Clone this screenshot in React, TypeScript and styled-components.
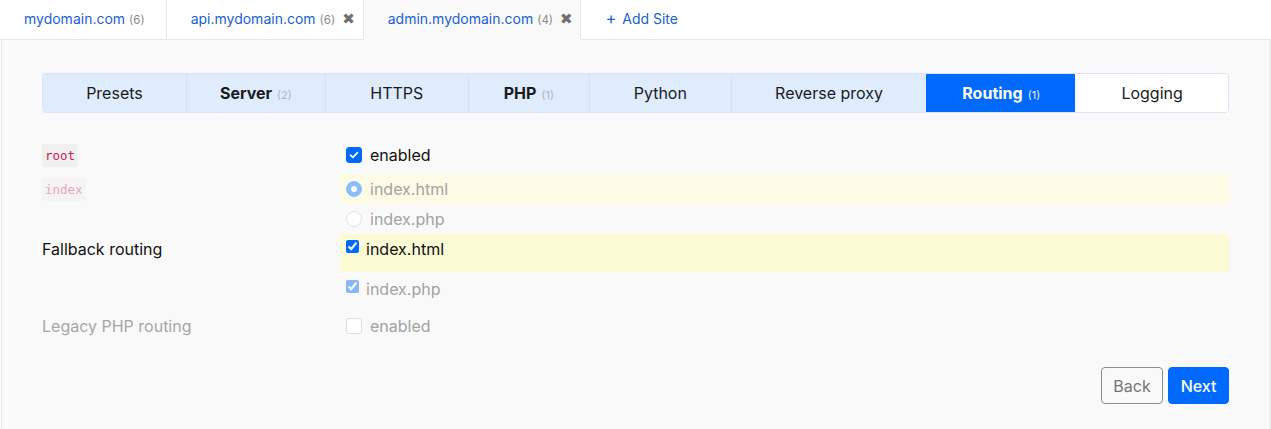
import React from "react";
import styled, { createGlobalStyle, css } from "styled-components";

const Global = createGlobalStyle`
  html, body { margin: 0; padding: 0; background: #ffffff; }
  body { font-family: Inter, "Open Sans", Arial, sans-serif; color: #000; }
  * { box-sizing: border-box; }
`;

const Page = styled.div`
  width: 1271px;
  height: 429px;
  display: flex;
  flex-direction: column;
  overflow: hidden;
`;

const SiteTabs = styled.div`
  display: flex;
  height: 40px;
  flex: 0 0 auto;
`;

const SiteTab = styled.div<{ $active?: boolean; $right?: number }>`
  display: flex;
  align-items: center;
  padding: 0 ${(p) => p.$right ?? 21}px 2px 24px;
  font-size: 14px;
  color: #1a5fd6;
  background: ${(p) => (p.$active ? "#f9f9f9" : "#ffffff")};
  border-right: 1px solid #e6e6e6;
  border-bottom: 1px solid ${(p) => (p.$active ? "transparent" : "#e6e6e6")};
  white-space: nowrap;
`;

const AddTab = styled(SiteTab)`
  flex: 1 1 auto;
  border-right: none;
  padding-left: 25px;
  gap: 6px;
`;

const Plus = styled.span`
  font-size: 16px;
  margin-top: -1px;
`;

const Count = styled.span`
  font-size: 11.5px;
  color: #8a8a8a;
  margin-left: 4px;
  margin-top: 2px;
`;

const Close = styled.span`
  font-size: 15px;
  color: #6f6f6f;
  margin-left: 7px;
  font-weight: 700;
  font-family: "DejaVu Sans", sans-serif;
`;

const Panel = styled.div`
  flex: 1 1 auto;
  background: #f9f9f9;
  border-left: 1px solid #e6e6e6;
  border-right: 1px solid #e6e6e6;
  margin-left: 1px;
  padding: 33px 41px 0 40px;
  display: flex;
  flex-direction: column;
`;

const TabBar = styled.div`
  display: flex;
  height: 40px;
  border-radius: 4px;
  overflow: hidden;
  border: 1px solid #d6e5f8;
`;

const Tab = styled.div<{ $state: "idle" | "active" | "next"; $w: number }>`
  flex: ${(p) => p.$w} 1 0;
  display: flex;
  align-items: center;
  justify-content: center;
  font-size: 16px;
  white-space: nowrap;
  border-left: 1px solid #d3e4f8;
  &:first-child { border-left: none; }
  ${(p) =>
    p.$state === "idle" &&
    css`
      background: #deecfd;
      color: #1b1b1b;
    `}
  ${(p) =>
    p.$state === "active" &&
    css`
      background: #0069ff;
      color: #ffffff;
      border-left-color: #0069ff;
    `}
  ${(p) =>
    p.$state === "next" &&
    css`
      background: #ffffff;
      color: #1b1b1b;
      border-left-color: #ffffff;
    `}
`;

const TabName = styled.span<{ $bold?: boolean }>`
  font-weight: ${(p) => (p.$bold ? 700 : 400)};
`;

const TabCount = styled.span<{ $light?: boolean }>`
  font-size: 11px;
  margin-left: 5px;
  margin-top: 3px;
  color: ${(p) => (p.$light ? "#e6efff" : "#b3b3b3")};
`;

const Form = styled.div`
  display: flex;
  flex-direction: column;
  margin-top: 27px;
`;

const Row = styled.div<{ $gap?: number }>`
  display: grid;
  grid-template-columns: 298px 1fr;
  margin-bottom: ${(p) => p.$gap ?? 0}px;
`;

const Label = styled.div<{ $h: number; $faded?: boolean }>`
  height: ${(p) => p.$h}px;
  display: flex;
  align-items: center;
  font-size: 16px;
  color: ${(p) => (p.$faded ? "#a6a6a6" : "#111")};
`;

const Code = styled.code<{ $faded?: boolean }>`
  font-family: "DejaVu Sans Mono", "Liberation Mono", monospace;
  font-size: 12.5px;
  color: ${(p) => (p.$faded ? "#eca5bd" : "#c7254e")};
  background: ${(p) => (p.$faded ? "#f5f3f4" : "#f0f0f0")};
  padding: 4px 3px;
  border-radius: 3px;
`;

const Options = styled.div`
  display: flex;
  flex-direction: column;
`;

const Option = styled.div<{ $h: number; $hl?: "full" | "soft"; $pt?: number; $faded?: boolean }>`
  height: ${(p) => p.$h}px;
  display: flex;
  align-items: ${(p) => (p.$pt != null ? "flex-start" : "center")};
  padding: ${(p) => p.$pt ?? 0}px 6px 0 6px;
  gap: 8px;
  font-size: 16px;
  color: ${(p) => (p.$faded ? "#a3a3a3" : "#111")};
  background: ${(p) => (p.$hl === "full" ? "#fafad4" : p.$hl === "soft" ? "#fcfce6" : "transparent")};
`;

const Box = styled.span<{ $on?: boolean; $faded?: boolean }>`
  width: 16px;
  height: 16px;
  border-radius: 3px;
  background: ${(p) => (p.$on ? "#0069ff" : "#fff")};
  border: 1px solid ${(p) => (p.$on ? "#0069ff" : p.$faded ? "#dedede" : "#bbb")};
  display: inline-flex;
  align-items: center;
  justify-content: center;
  flex: 0 0 auto;
`;

const Radio = styled.span<{ $on?: boolean }>`
  width: 16px;
  height: 16px;
  border-radius: 50%;
  background: ${(p) => (p.$on ? "#8cbcff" : "#fff")};
  border: 1px solid ${(p) => (p.$on ? "#8cbcff" : "#e0e0e0")};
  display: inline-flex;
  align-items: center;
  justify-content: center;
  flex: 0 0 auto;
  &::after {
    content: "";
    display: ${(p) => (p.$on ? "block" : "none")};
    width: 6px;
    height: 6px;
    border-radius: 50%;
    background: #fff;
  }
`;

const Native = styled.input<{ $faded?: boolean }>`
  width: 13px;
  height: 13px;
  margin: 1px 0 0 0;
  accent-color: #0069ff;
  flex: 0 0 auto;
  opacity: ${(p) => (p.$faded ? 0.45 : 1)};
`;

const NativeOption = styled(Option)`
  gap: 7px;
`;

const Actions = styled.div`
  display: flex;
  justify-content: flex-end;
  gap: 5px;
  margin-top: 26px;
`;

const Button = styled.button<{ $primary?: boolean }>`
  height: 37px;
  padding: 0 11.5px;
  font-family: inherit;
  font-size: 16px;
  border-radius: 4px;
  cursor: pointer;
  ${(p) =>
    p.$primary
      ? css`
          background: #0069ff;
          border: 1px solid #0069ff;
          color: #fff;
          font-weight: 500;
        `
      : css`
          background: transparent;
          border: 1px solid #8c8c8c;
          color: #757575;
        `}
`;

const Check = () => (
  <svg width="10" height="8" viewBox="0 0 10 8">
    <path d="M1.5 4.2 L3.9 6.4 L8.5 1.6" fill="none" stroke="#fff" strokeWidth="1.8" strokeLinecap="round" strokeLinejoin="round" />
  </svg>
);

const tabs: { name: string; count?: number; bold?: boolean; w: number; state: "idle" | "active" | "next" }[] = [
  { name: "Presets", w: 144, state: "idle" },
  { name: "Server", count: 2, bold: true, w: 139, state: "idle" },
  { name: "HTTPS", w: 143, state: "idle" },
  { name: "PHP", count: 1, bold: true, w: 121, state: "idle" },
  { name: "Python", w: 142, state: "idle" },
  { name: "Reverse proxy", w: 196, state: "idle" },
  { name: "Routing", count: 1, bold: true, w: 149, state: "active" },
  { name: "Logging", w: 153, state: "next" },
];

export default function App() {
  return (
    <Page>
      <Global />
      <SiteTabs>
        <SiteTab>
          mydomain.com<Count>(6)</Count>
        </SiteTab>
        <SiteTab $right={8}>
          api.mydomain.com<Count>(6)</Count>
          <Close>✖</Close>
        </SiteTab>
        <SiteTab $active $right={7}>
          admin.mydomain.com<Count>(4)</Count>
          <Close>✖</Close>
        </SiteTab>
        <AddTab>
          <Plus>+</Plus>Add Site
        </AddTab>
      </SiteTabs>
      <Panel>
        <TabBar>
          {tabs.map((t) => (
            <Tab key={t.name} $state={t.state} $w={t.w}>
              <TabName $bold={t.bold}>{t.name}</TabName>
              {t.count != null && <TabCount $light={t.state === "active"}>({t.count})</TabCount>}
            </Tab>
          ))}
        </TabBar>
        <Form>
          <Row $gap={4}>
            <Label $h={30}>
              <Code>root</Code>
            </Label>
            <Options>
              <Option $h={30}>
                <Box $on>
                  <Check />
                </Box>
                enabled
              </Option>
            </Options>
          </Row>
          <Row>
            <Label $h={30}>
              <Code $faded>index</Code>
            </Label>
            <Options>
              <Option $h={30} $hl="soft" $faded>
                <Radio $on />
                index.html
              </Option>
              <Option $h={30} $faded>
                <Radio />
                index.php
              </Option>
            </Options>
          </Row>
          <Row>
            <Label $h={30}>Fallback routing</Label>
            <Options>
              <NativeOption $h={38} $hl="full" $pt={5}>
                <Native type="checkbox" defaultChecked />
                index.html
              </NativeOption>
            </Options>
          </Row>
          <Row>
            <Label $h={0} />
            <Options>
              <NativeOption $h={39} $pt={7} $faded>
                <Native type="checkbox" defaultChecked $faded />
                index.php
              </NativeOption>
            </Options>
          </Row>
          <Row>
            <Label $h={30} $faded>
              Legacy PHP routing
            </Label>
            <Options>
              <Option $h={30} $faded>
                <Box $faded />
                enabled
              </Option>
            </Options>
          </Row>
        </Form>
        <Actions>
          <Button>Back</Button>
          <Button $primary>Next</Button>
        </Actions>
      </Panel>
    </Page>
  );
}
